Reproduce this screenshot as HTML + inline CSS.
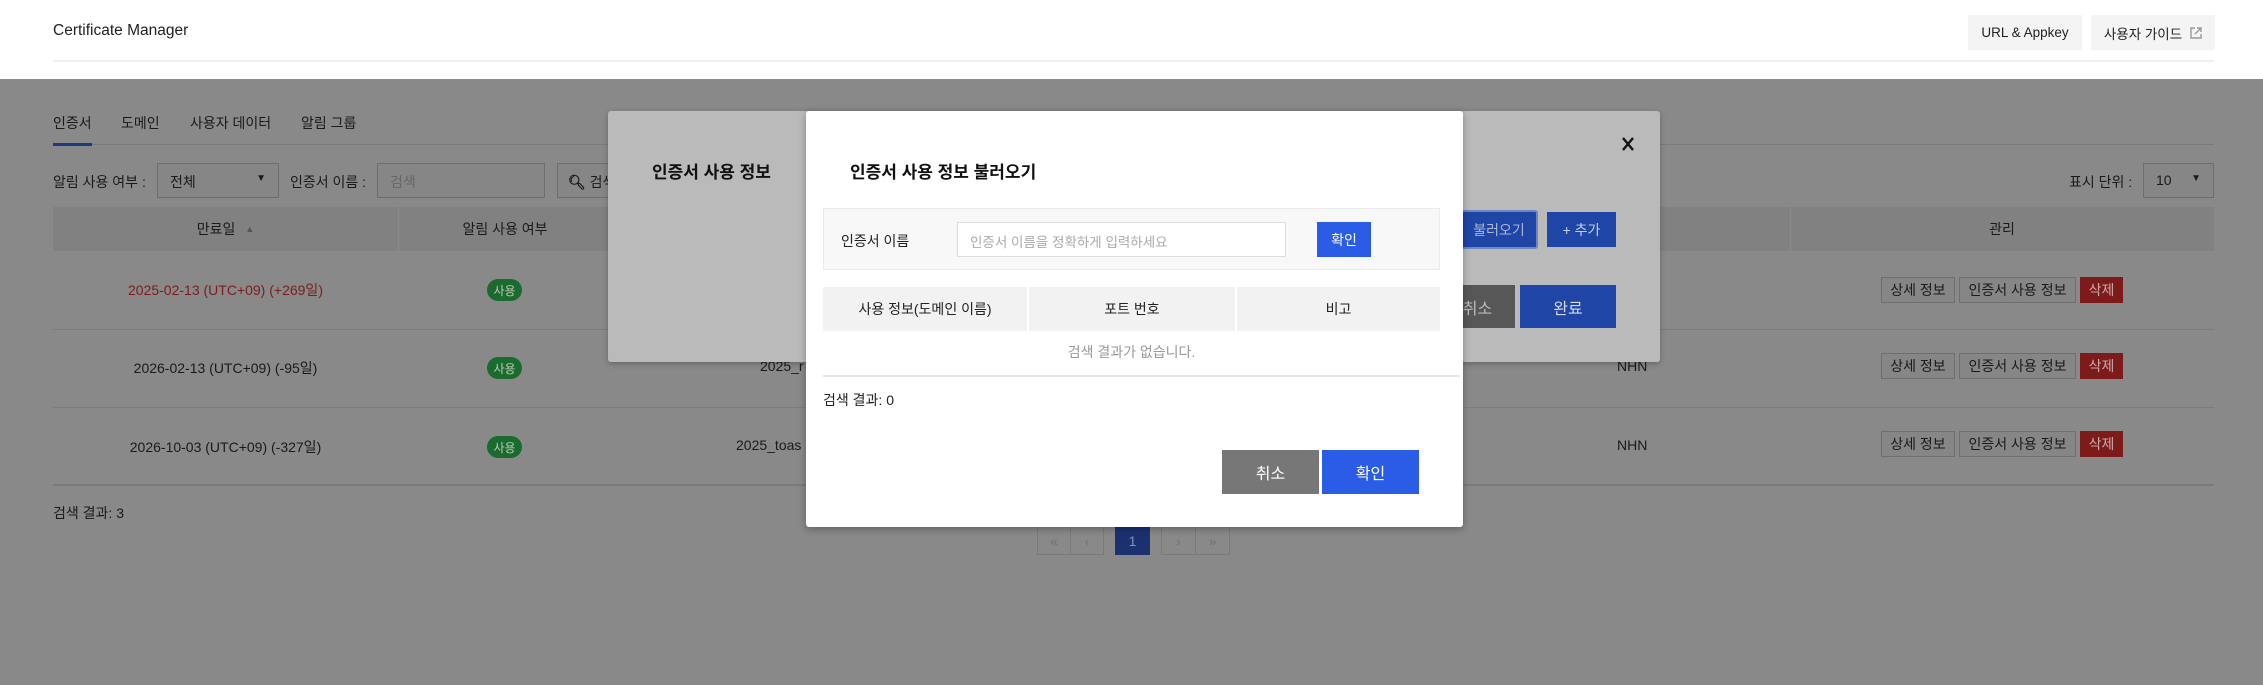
<!DOCTYPE html>
<html><head><meta charset="utf-8">
<style>
*{box-sizing:border-box;margin:0;padding:0}
body{width:2263px;height:685px;position:relative;overflow:hidden;background:#898989;font-family:"Liberation Sans","Noto Sans CJK KR",sans-serif;font-size:14px;color:#1a1a1a}
.a{position:absolute;white-space:nowrap}
.c{display:flex;align-items:center;justify-content:center}
.hb{background:#f4f4f4;color:#222}
.ob{border:1px solid #6e6e6e;background:#868686;color:#1a1a1a;font-size:14px}
</style></head><body>
<div class="a" style="left:0;top:0;width:2263px;height:79px;background:#fff"></div>
<div class="a" style="left:53px;top:22px;font-size:15.5px;color:#222">Certificate Manager</div>
<div class="a" style="left:53px;top:60px;width:2161px;height:2px;background:#efefef"></div>
<div class="a c hb" style="left:1968px;top:15px;width:114px;height:35px;font-size:13.5px">URL &amp; Appkey</div>
<div class="a c hb" style="left:2091px;top:15px;width:124px;height:35px;font-size:13.5px">사용자 가이드 <svg width="12" height="12" viewBox="0 0 12 12" style="margin-left:8px"><path d="M5 1H1v10h10V7M7 1h4v4M11 1L5 7" fill="none" stroke="#999" stroke-width="1.4"/></svg></div>

<!-- tabs -->
<div class="a" style="left:53px;top:113px">인증서</div>
<div class="a" style="left:121px;top:113px">도메인</div>
<div class="a" style="left:190px;top:113px">사용자 데이터</div>
<div class="a" style="left:301px;top:113px">알림 그룹</div>
<div class="a" style="left:53px;top:144px;width:2161px;height:1px;background:#7a7a7a"></div>
<div class="a" style="left:53px;top:143px;width:39px;height:3px;background:#1d3b80"></div>

<!-- filters -->
<div class="a" style="left:53px;top:172px">알림 사용 여부 :</div>
<div class="a ob" style="left:157px;top:163px;width:122px;height:35px;padding:8px 12px">전체<span style="position:absolute;right:12px;top:9px;font-size:10px">▼</span></div>
<div class="a" style="left:290px;top:172px">인증서 이름 :</div>
<div class="a ob" style="left:377px;top:163px;width:168px;height:35px;padding:8px 12px;color:#666">검색</div>
<div class="a ob" style="left:557px;top:163px;width:80px;height:35px;padding:8px 10px;overflow:hidden"><b>&#x1F50D;&#xFE0E;</b> 검색</div>

<div class="a" style="left:2069px;top:172px">표시 단위 :</div>
<div class="a ob" style="left:2143px;top:163px;width:71px;height:35px;padding:8px 12px">10<span style="position:absolute;right:12px;top:9px;font-size:10px">▼</span></div>

<!-- table -->
<div class="a" style="left:53px;top:207px;width:2161px;height:44px;background:#818181"></div>
<div class="a" style="left:398px;top:207px;width:1px;height:44px;background:#8a8a8a"></div>
<div class="a" style="left:1790px;top:207px;width:1px;height:44px;background:#8a8a8a"></div>
<div class="a c" style="left:53px;top:207px;width:345px;height:44px">만료일 <span style="font-size:9px;margin-left:10px;color:#555">▲</span></div>
<div class="a c" style="left:398px;top:207px;width:214px;height:44px">알림 사용 여부</div>
<div class="a c" style="left:1790px;top:207px;width:424px;height:44px">관리</div>

<div class="a" style="left:53px;top:329px;width:2161px;height:1px;background:#7c7c7c"></div>
<div class="a" style="left:53px;top:407px;width:2161px;height:1px;background:#7c7c7c"></div>
<div class="a" style="left:53px;top:484px;width:2161px;height:2px;background:#7a7a7a"></div>

<div class="a c" style="left:53px;top:280px;width:345px;height:20px;color:#7d1c1c">2025-02-13 (UTC+09) (+269일)</div>
<div class="a c" style="left:53px;top:358px;width:345px;height:20px">2026-02-13 (UTC+09) (-95일)</div>
<div class="a c" style="left:53px;top:437px;width:345px;height:20px">2026-10-03 (UTC+09) (-327일)</div>
<div class="a c" style="left:487px;top:279px;width:35px;height:22px;border-radius:11px;background:#1b6a2e;color:#b9c9bb;font-size:12px">사용</div>
<div class="a c" style="left:487px;top:357px;width:35px;height:22px;border-radius:11px;background:#1b6a2e;color:#b9c9bb;font-size:12px">사용</div>
<div class="a c" style="left:487px;top:436px;width:35px;height:22px;border-radius:11px;background:#1b6a2e;color:#b9c9bb;font-size:12px">사용</div>
<div class="a" style="left:760px;top:358px">2025_r</div>
<div class="a" style="left:736px;top:437px">2025_toas</div>
<div class="a" style="left:1617px;top:358px">NHN</div>
<div class="a" style="left:1617px;top:437px">NHN</div>
<div class="a" style="left:53px;top:503px">검색 결과: 3</div>

<!-- actions -->
<div class="a" style="left:1881px;top:277px;height:26px;display:flex;gap:4px">
<div class="c ob" style="width:74px;height:26px">상세 정보</div><div class="c ob" style="width:117px;height:26px">인증서 사용 정보</div><div class="c" style="width:43px;height:26px;background:#7d1b1b;color:#c9a9a9">삭제</div></div>
<div class="a" style="left:1881px;top:353px;height:26px;display:flex;gap:4px">
<div class="c ob" style="width:74px;height:26px">상세 정보</div><div class="c ob" style="width:117px;height:26px">인증서 사용 정보</div><div class="c" style="width:43px;height:26px;background:#7d1b1b;color:#c9a9a9">삭제</div></div>
<div class="a" style="left:1881px;top:431px;height:26px;display:flex;gap:4px">
<div class="c ob" style="width:74px;height:26px">상세 정보</div><div class="c ob" style="width:117px;height:26px">인증서 사용 정보</div><div class="c" style="width:43px;height:26px;background:#7d1b1b;color:#c9a9a9">삭제</div></div>

<!-- pagination -->
<div class="a" style="left:1037px;top:527px;width:67px;height:28px;border:1px solid #7a7a7a;border-top:none;display:flex;color:#727272"><div class="c" style="flex:1;border-right:1px solid #7a7a7a">«</div><div class="c" style="flex:1">‹</div></div>
<div class="a c" style="left:1115px;top:527px;width:35px;height:28px;background:#1b3170;color:#8090b5">1</div>
<div class="a" style="left:1161px;top:527px;width:69px;height:28px;border:1px solid #7a7a7a;border-top:none;display:flex;color:#727272"><div class="c" style="flex:1;border-right:1px solid #7a7a7a">›</div><div class="c" style="flex:1">»</div></div>

<!-- modal 1 -->
<div class="a" style="left:608px;top:111px;width:1052px;height:251px;background:#bababa;border-radius:3px;box-shadow:0 2px 6px rgba(0,0,0,.25)"></div>
<div class="a" style="left:652px;top:158px;font-size:17px;font-weight:bold;color:#111">인증서 사용 정보</div>
<svg class="a" style="left:1621px;top:137px" width="14" height="14" viewBox="0 0 14 14"><path d="M2 1L12 13M12 1L2 13" stroke="#111" stroke-width="2.4"/></svg>
<div class="a c" style="left:1460px;top:210px;width:78px;height:39px;background:#1f45a6;color:#aab6d8;border:2px solid #6f86c0;border-radius:3px">불러오기</div>
<div class="a c" style="left:1547px;top:212px;width:69px;height:35px;background:#1f45a6;color:#c7d0e8">+ 추가</div>
<div class="a c" style="left:1440px;top:285px;width:75px;height:43px;background:#575757;color:#bbb;font-size:16px">취소</div>
<div class="a c" style="left:1520px;top:285px;width:96px;height:43px;background:#1f45a6;color:#d0d7eb;font-size:16px">완료</div>

<!-- modal 2 -->
<div class="a" style="left:806px;top:111px;width:657px;height:416px;background:#fff;border-radius:3px;box-shadow:0 2px 8px rgba(0,0,0,.3)"></div>
<div class="a" style="left:850px;top:158px;font-size:17px;font-weight:bold;color:#111">인증서 사용 정보 불러오기</div>
<div class="a" style="left:823px;top:208px;width:617px;height:62px;background:#f8f8f8;border:1px solid #ebebeb"></div>
<div class="a" style="left:841px;top:231px;color:#222">인증서 이름</div>
<div class="a" style="left:957px;top:222px;width:329px;height:35px;background:#fff;border:1px solid #ddd;padding:8px 12px;color:#aaa;font-size:13.5px">인증서 이름을 정확하게 입력하세요</div>
<div class="a c" style="left:1317px;top:222px;width:54px;height:35px;background:#2b5ce6;color:#fff">확인</div>
<div class="a" style="left:823px;top:287px;width:617px;height:44px;background:#f2f2f2"></div>
<div class="a" style="left:1027px;top:287px;width:2px;height:44px;background:#fff"></div>
<div class="a" style="left:1235px;top:287px;width:2px;height:44px;background:#fff"></div>
<div class="a c" style="left:823px;top:287px;width:204px;height:44px;color:#222">사용 정보(도메인 이름)</div>
<div class="a c" style="left:1029px;top:287px;width:206px;height:44px;color:#222">포트 번호</div>
<div class="a c" style="left:1237px;top:287px;width:203px;height:44px;color:#222">비고</div>
<div class="a c" style="left:823px;top:342px;width:617px;height:20px;color:#999">검색 결과가 없습니다.</div>
<div class="a" style="left:823px;top:375px;width:637px;height:2px;background:#e6e6e6"></div>
<div class="a" style="left:823px;top:390px;color:#222">검색 결과: 0</div>
<div class="a c" style="left:1222px;top:450px;width:97px;height:44px;background:#777;color:#fff;font-size:16px">취소</div>
<div class="a c" style="left:1322px;top:450px;width:97px;height:44px;background:#2b5ce6;color:#fff;font-size:16px">확인</div>
</body></html>
